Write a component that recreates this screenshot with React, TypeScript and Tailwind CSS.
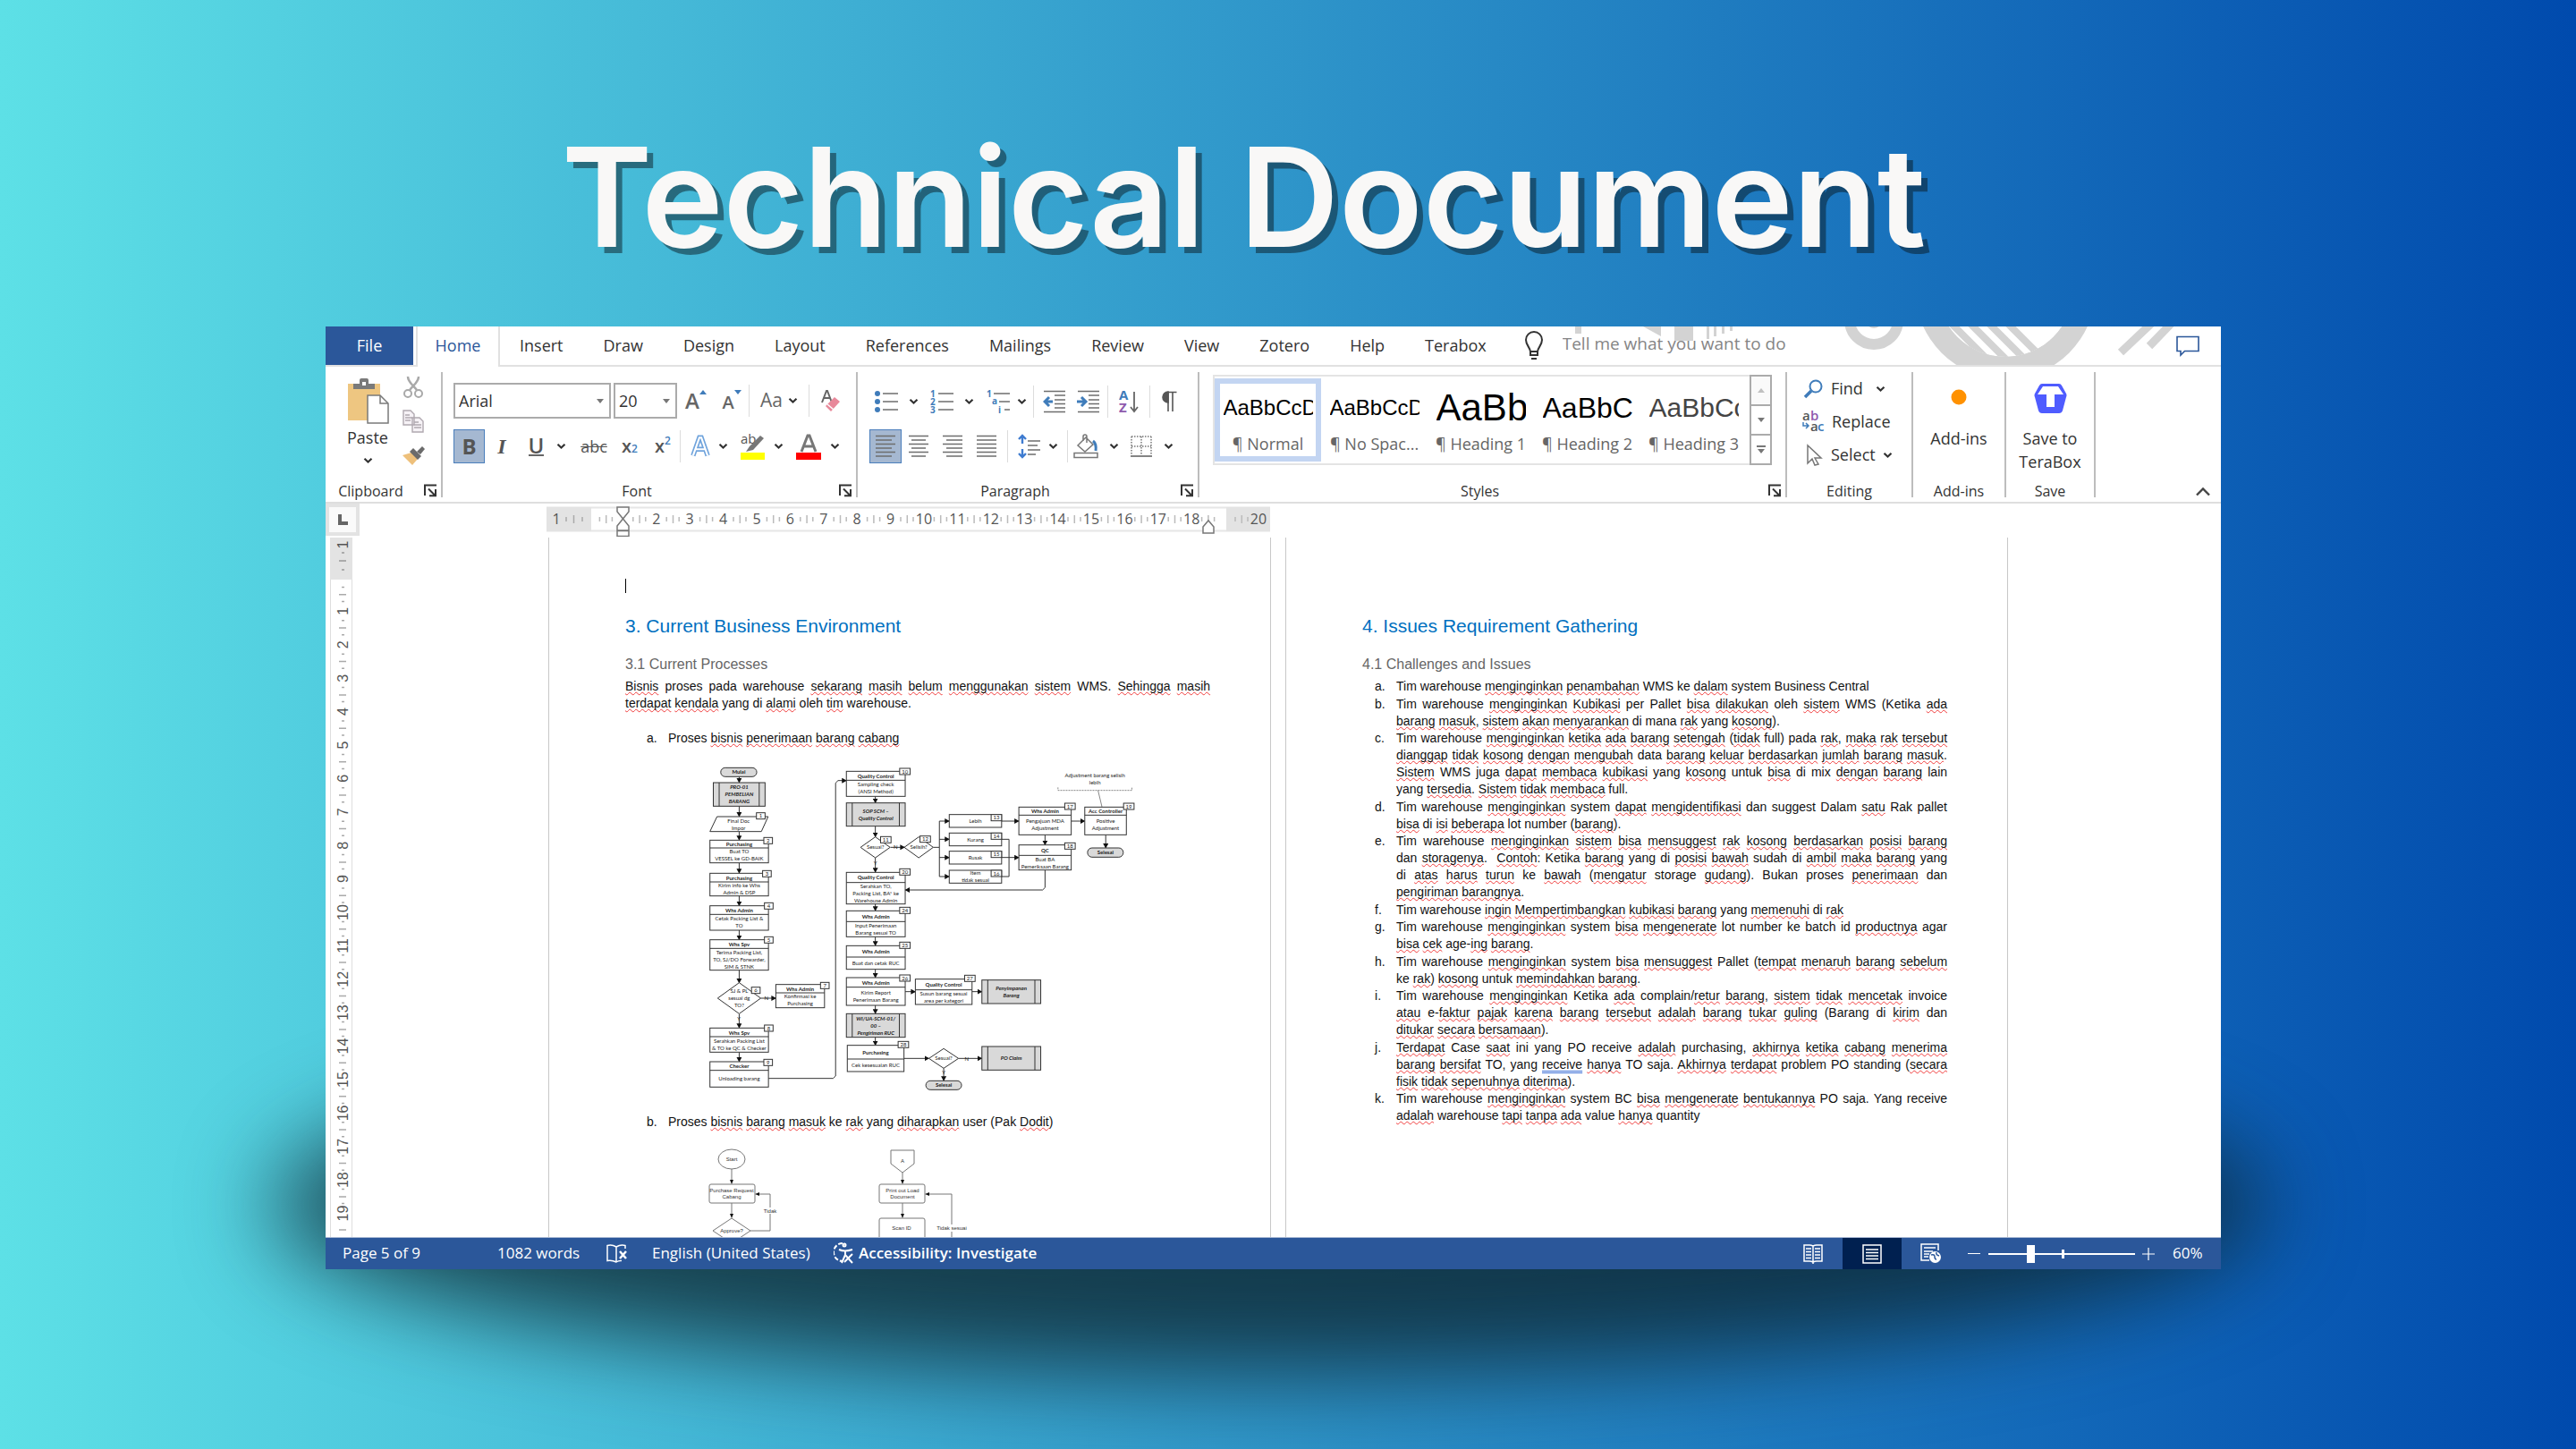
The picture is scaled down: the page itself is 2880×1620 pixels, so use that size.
import React from "react";

/* ---------- shared bits ---------- */

function Chevron() {
  return (
    <svg width="11" height="8" viewBox="0 0 11 8" fill="none" stroke="#333" strokeWidth="2.2" className="shrink-0">
      <path d="M1.5 1.8 5.5 5.6 9.5 1.8" />
    </svg>
  );
}

function Sep() {
  return <span className="h-9 w-px shrink-0 bg-[#dcdcdc]" />;
}

type ToolProps = { label: string; className: string; active?: boolean; children: React.ReactNode };

function Tool({ label, className, active, children }: ToolProps) {
  return (
    <button
      type="button"
      aria-label={label}
      aria-pressed={active}
      className={
        "flex h-[38px] shrink-0 items-center justify-center " +
        (active ? "border border-[#4a7ebb] bg-[#a5b8d1] " : "") +
        className
      }
    >
      {children}
    </button>
  );
}

function Launcher({ label }: { label: string }) {
  return (
    <button type="button" aria-label={label} className="absolute right-1 bottom-0">
      <svg width="15" height="15" viewBox="0 0 15 15" fill="none" stroke="#333" strokeWidth="2">
        <path d="M1 13V1.5H14" />
        <path d="M5 5.5 12 12.5M13 6V13.2H6" />
      </svg>
    </button>
  );
}

function Group({ title, launcher, className, children }: { title: string; launcher?: boolean; className: string; children: React.ReactNode }) {
  return (
    <section
      aria-label={title}
      className={"relative mt-1.5 flex h-[140px] shrink-0 flex-col border-r-2 border-[#bdbdbd] " + className}
    >
      <div className="flex-1">{children}</div>
      <div className={"text-center text-base leading-[14px] " + (launcher ? "pr-7" : "")}>{title}</div>
      {launcher && <Launcher label={title + " settings"} />}
    </section>
  );
}

/* ---------- title bar ---------- */

const tabs = ["Insert", "Draw", "Design", "Layout", "References", "Mailings", "Review", "View", "Zotero", "Help", "Terabox"];

function TabBar() {
  return (
    <nav className="relative flex h-[45px] shrink-0 items-stretch border-b-2 border-[#e1e1e1] text-lg text-[#333]">
      <svg className="absolute top-0 right-0" width="740" height="43" viewBox="1743 365 740 43" fill="#d3d3d3">
        <path d="M1761 365h7v8h-7zM1837 365h20v11zM1872 365h21v16h-21zM1908 365h3v14h-3zM1916 365h3v11h-3zM1925 365h3v8h-3zM1934 365h3v5h-3z" />
        <circle cx="2095" cy="358" r="27" fill="none" stroke="#d3d3d3" strokeWidth="12" />
        <circle cx="2095" cy="358" r="9" />
        <circle cx="2242" cy="323" r="101" />
        <clipPath id="disc">
          <circle cx="2242" cy="323" r="76" />
        </clipPath>
        <g clipPath="url(#disc)">
          <circle cx="2242" cy="323" r="76" fill="#fff" />
          <path d="M2175 355l60 60M2196 355l60 60M2217 355l60 60M2238 355l60 60" stroke="#d3d3d3" strokeWidth="8" />
        </g>
        <path d="M2407 360 2371 394M2431 358 2403 387" stroke="#d3d3d3" strokeWidth="9" />
      </svg>
      <button type="button" className="w-[98px] bg-[#2b579a] pb-0.5 text-white">File</button>
      <button type="button" aria-current="page" className="relative -mb-0.5 ml-[3px] w-[94px] border-x-2 border-[#e1e1e1] bg-white pb-1 text-[#2b579a]">Home</button>
      <div className="flex gap-px">
        {tabs.map((t) => (
          <button key={t} type="button" className="px-[22px] pb-0.5">{t}</button>
        ))}
      </div>
      <label className="relative ml-5 flex flex-1 items-center gap-[21px]">
        <svg width="22" height="34" viewBox="0 0 22 34" fill="none" stroke="#333" strokeWidth="2">
          <path d="M7 23c0-4-5-7-5-13a9 9 0 0 1 18 0c0 6-5 9-5 13v4H7zM7 23h8M8 31h6" />
        </svg>
        <input
          type="text"
          aria-label="Tell me what you want to do"
          placeholder="Tell me what you want to do"
          className="w-72 bg-transparent pb-1 text-[19px] outline-none placeholder:text-[#858585]"
        />
      </label>
      <button type="button" aria-label="Comments" className="relative mr-6">
        <svg width="26" height="24" viewBox="0 0 26 24" fill="#fff" stroke="#2b579a" strokeWidth="1.6">
          <path d="M1 1.500h24v16H9.500L5 22v-4.500H1z" />
        </svg>
      </button>
    </nav>
  );
}

/* ---------- ribbon ---------- */

function ClipboardGroup() {
  return (
    <Group title="Clipboard" launcher className="w-[131px]">
      <div className="flex">
        <button type="button" className="ml-2 flex w-[78px] flex-col items-center pt-1.5 text-lg leading-6">
          <svg width="48" height="52" viewBox="0 0 48 52">
            <path d="M2 7h36v41H2z" fill="#eec681" />
            <path d="M8 13V7h7V3q0-2 2-2h6q2 0 2 2v4h7v6z" fill="#7a7a7a" />
            <path d="M18 5h4v4h-4z" fill="#fff" />
            <path d="M24 20h14l9 9v22H24z" fill="#fff" stroke="#7a7a7a" strokeWidth="1.5" />
            <path d="M38 20v9h9" fill="none" stroke="#7a7a7a" strokeWidth="1.500" />
          </svg>
          <span className="mt-[3px] mb-2.5">Paste</span>
          <Chevron />
        </button>
        <div className="-mt-0.5 flex flex-col">
          <Tool label="Cut" className="-ml-1.5 w-9">
            <svg width="24" height="26" viewBox="0 0 24 26" fill="none" stroke="#a9a9a9" strokeWidth="2">
              <path d="M6 1c0 6 5 9 10 15M18 1c0 6-5 9-10 15" strokeWidth="2.500" />
              <circle cx="6" cy="20" r="4" />
              <circle cx="18" cy="20" r="4" />
            </svg>
          </Tool>
          <Tool label="Copy" className="-ml-1.5 w-9">
            <svg width="26" height="26" viewBox="0 0 26 26" fill="#f6f2f6" stroke="#b0a9b0" strokeWidth="1.400">
              <path d="M2 1h8l4 4v12H2zM12 9h8l4 4v12H12z" />
              <path d="M4 6h5M4 9h8M4 12h6M14 14h5M14 17h8M14 20h8" />
            </svg>
          </Tool>
          <Tool label="Format painter" className="-ml-1.5 w-9">
            <svg width="27" height="24" viewBox="0 0 27 24">
              <path d="M1 12 11 9l7 7-6 7z" fill="#eec07b" />
              <path d="m9 8 4-4 9 9-4 4z" fill="#6b6b6b" />
              <path d="m17 8 6-6 3 3-5 6z" fill="#6b6b6b" />
            </svg>
          </Tool>
        </div>
      </div>
    </Group>
  );
}

function Picker({ label, value, className }: { label: string; value: string; className: string }) {
  return (
    <label className={"relative block h-10 border-2 border-[#ababab] " + className}>
      <select aria-label={label} defaultValue={value} className="h-full w-full appearance-none bg-white px-1 text-lg outline-none">
        <option>{value}</option>
      </select>
      <svg className="absolute top-4 right-1.5" width="8" height="5" viewBox="0 0 8 5" fill="#777">
        <path d="M0 0h8L4 5z" />
      </svg>
    </label>
  );
}

function FontGroup() {
  return (
    <Group title="Font" launcher className="w-[464px]">
      <div className="flex h-[52px] items-end pl-3">
        <div className="flex items-center">
          <Picker label="Font" value="Arial" className="mr-[3px] w-[176px]" />
          <Picker label="Font size" value="20" className="w-[71px]" />
          <Tool label="Grow font" className="w-[42px] text-[#666]">
            <span className="text-2xl font-semibold">A</span>
            <svg className="mb-5" width="8" height="5" viewBox="0 0 8 5" fill="#3f7cba"><path d="M0 5h8L4 0z" /></svg>
          </Tool>
          <Tool label="Shrink font" className="w-[38px] text-[#666]">
            <span className="pt-1 text-xl font-semibold">A</span>
            <svg className="mb-5" width="8" height="5" viewBox="0 0 8 5" fill="#3f7cba"><path d="M0 0h8L4 5z" /></svg>
          </Tool>
          <Sep />
          <Tool label="Change case" className="w-[66px] gap-1.5 text-[#666]">
            <span className="text-[21px]">Aa</span>
            <Chevron />
          </Tool>
          <Sep />
          <Tool label="Clear formatting" className="w-12">
            <svg width="24" height="28" viewBox="0 0 24 28">
              <path d="M2 16 7 3h1l5 13M4 11h7" fill="none" stroke="#666" strokeWidth="2" />
              <path d="m6 20 10-10 6 5-10 11z" fill="#e8889a" />
              <path d="m8 18 7 6" stroke="#fff" strokeWidth="1.500" />
            </svg>
          </Tool>
        </div>
      </div>
      <div className="mt-3 flex items-center pl-3 text-[#555]">
        <Tool label="Bold" active className="w-[35px] text-2xl font-bold">B</Tool>
        <Tool label="Italic" className="w-[38px] font-['Liberation_Serif'] text-2xl font-bold italic">I</Tool>
        <Tool label="Underline" className="ml-0.5 w-[60px] gap-3.5">
          <span className="border-b-2 border-[#666] text-2xl leading-5 font-semibold">U</span>
          <Chevron />
        </Tool>
        <Tool label="Strikethrough" className="w-11 text-lg line-through">abc</Tool>
        <Tool label="Subscript" className="w-9 text-xl font-semibold">x<sub className="text-xs text-[#3f7cba]">2</sub></Tool>
        <Tool label="Superscript" className="w-[38px] text-xl font-semibold">x<sup className="text-xs text-[#3f7cba]">2</sup></Tool>
        <Sep />
        <Tool label="Text effects" className="w-[62px] gap-2">
          <svg width="24" height="26" viewBox="0 0 20 24" fill="none">
            <path d="M2.500 21.500 9 3h2l6.500 18.500M5.500 15h9" stroke="#6fa3dc" strokeWidth="5" />
            <path d="M2.500 21.500 9 3h2l6.500 18.500M5.500 15h9" stroke="#fff" strokeWidth="2" />
          </svg>
          <Chevron />
        </Tool>
        <Tool label="Highlight colour" className="w-[58px] gap-2.5">
          <svg width="27" height="30" viewBox="0 0 27 30">
            <text x="0" y="12" fontSize="15" fill="#555">ab</text>
            <path d="m6 21 4-6L22 3l4 3-12 13z" fill="#777" />
            <path d="M0 22h27v8H0z" fill="#ff0" />
          </svg>
          <Chevron />
        </Tool>
        <Tool label="Font colour" className="w-[66px] gap-2.5">
          <svg width="28" height="30" viewBox="0 0 28 30">
            <path d="M6 21 13 3h2l7 18M9 15h10" fill="none" stroke="#777" strokeWidth="3" />
            <path d="M0 22h28v8H0z" fill="#f00" />
          </svg>
          <Chevron />
        </Tool>
      </div>
    </Group>
  );
}

function Lines({ d }: { d: string }) {
  return (
    <svg width="24" height="26" viewBox="0 0 24 26" fill="none" stroke="#6e6e6e" strokeWidth="1.600">
      <path d={d} />
    </svg>
  );
}

function ParagraphGroup() {
  return (
    <Group title="Paragraph" launcher className="w-[382px]">
      <div className="flex h-[52px] items-end pl-3 text-[#555]">
        <div className="flex items-center">
          <Tool label="Bullets" className="w-[62px] gap-3">
            <svg width="26" height="26" viewBox="0 0 26 26" stroke="#6e6e6e" strokeWidth="1.600">
              <path d="M9 4h17M9 13h17M9 22h17" />
              <g fill="#3f7cba" stroke="none"><circle cx="3" cy="4" r="3" /><circle cx="3" cy="13" r="3" /><circle cx="3" cy="22" r="3" /></g>
            </svg>
            <Chevron />
          </Tool>
          <Tool label="Numbering" className="w-[62px] gap-3">
            <svg width="26" height="28" viewBox="0 0 26 28">
              <path d="M9 5h17M9 14h17M9 23h17" stroke="#6e6e6e" strokeWidth="1.600" />
              <g fill="#3f7cba" fontSize="10" fontWeight="700"><text x="0" y="9">1</text><text x="0" y="18">2</text><text x="0" y="27">3</text></g>
            </svg>
            <Chevron />
          </Tool>
          <Tool label="Multilevel list" className="w-[60px] gap-2">
            <svg width="26" height="28" viewBox="0 0 26 28">
              <path d="M8 5h18M14 14h12M20 23h6" stroke="#6e6e6e" strokeWidth="1.600" />
              <g fill="#3f7cba" fontSize="10" fontWeight="700"><text x="0" y="9">1</text><text x="6" y="17">a</text><text x="13" y="27">i</text></g>
            </svg>
            <Chevron />
          </Tool>
          <Sep />
          <Tool label="Decrease indent" className="ml-1 w-[38px]">
            <svg width="26" height="26" viewBox="0 0 26 26" fill="none" stroke="#6e6e6e" strokeWidth="1.600">
              <path d="M1 1.500h24M13 6h12M13 11h12M13 15.500h12M13 20h12M1 24.500h24" />
              <path d="M11 13H2M7 8l-5 5 5 5" stroke="#3f7cba" strokeWidth="3" />
            </svg>
          </Tool>
          <Tool label="Increase indent" className="mr-0.5 w-[38px]">
            <svg width="26" height="26" viewBox="0 0 26 26" fill="none" stroke="#6e6e6e" strokeWidth="1.600">
              <path d="M1 1.500h24M13 6h12M13 11h12M13 15.500h12M13 20h12M1 24.500h24" />
              <path d="M0 13h9M5 8l5 5-5 5" stroke="#3f7cba" strokeWidth="3" />
            </svg>
          </Tool>
          <Sep />
          <Tool label="Sort" className="w-[46px]">
            <svg width="22" height="28" viewBox="0 0 22 28">
              <text x="0" y="12" fontSize="15" fontWeight="700" fill="#3f7cba">A</text>
              <text x="0" y="26" fontSize="15" fontWeight="700" fill="#8e5aad">Z</text>
              <path d="M17 3v22M13 20l4 5 4-5" fill="none" stroke="#666" strokeWidth="1.800" />
            </svg>
          </Tool>
          <Sep />
          <Tool label="Show marks" className="w-[42px]">
            <svg width="18" height="24" viewBox="0 0 18 24" fill="none" stroke="#555" strokeWidth="1.600">
              <path d="M17.500 1.500H7M8 1v22M13 1v22" />
              <path d="M8 1a6 6 0 0 0 0 12z" fill="#555" />
            </svg>
          </Tool>
        </div>
      </div>
      <div className="mt-3 flex items-center pl-[13px]">
        <Tool label="Align left" active className="w-9"><Lines d="M1 1.500h22M1 6h18M1 10.500h22M1 15h18M1 19.500h22M1 24h18" /></Tool>
        <Tool label="Centre" className="w-[38px]"><Lines d="M1 1.500h22M4 6h16M1 10.500h22M4 15h16M1 19.500h22M4 24h16" /></Tool>
        <Tool label="Align right" className="w-[38px]"><Lines d="M1 1.500h22M5 6h18M1 10.500h22M5 15h18M1 19.500h22M5 24h18" /></Tool>
        <Tool label="Justify" className="mr-1 w-[38px]"><Lines d="M1 1.500h22M1 6h22M1 10.500h22M1 15h22M1 19.500h22M1 24h22" /></Tool>
        <Sep />
        <Tool label="Line spacing" className="w-[66px] gap-2">
          <svg width="26" height="28" viewBox="0 0 26 28" fill="none">
            <path d="M11 8h14M11 13h11M11 18h14M11 23h9" stroke="#6e6e6e" strokeWidth="1.600" />
            <path d="M5 2v9M1 6l4-4 4 4M5 17v9M1 22l4 4 4-4" stroke="#3f7cd0" strokeWidth="2.400" />
          </svg>
          <Chevron />
        </Tool>
        <Sep />
        <Tool label="Shading" className="w-[62px] gap-3">
          <svg width="28" height="28" viewBox="0 0 28 28" fill="none" stroke="#777" strokeWidth="1.500">
            <path d="m5 13 9-9 8 8-9 8zM11 8V3q0-2 2-2t2 2v7" />
            <path d="M22 8q4 3 3 11" stroke="#3f7cba" strokeWidth="3" />
            <path d="M1 21.500h26v5H1z" />
          </svg>
          <Chevron />
        </Tool>
        <Tool label="Borders" className="w-[62px] gap-3">
          <svg width="26" height="26" viewBox="0 0 26 26" fill="none" stroke="#777" strokeWidth="1.500">
            <path d="M2 2h22M2 13h22M2 2v21M13 2v21M24 2v21" strokeDasharray="1.500 1.500" />
            <path d="M1 24h24" strokeWidth="1.800" />
          </svg>
          <Chevron />
        </Tool>
      </div>
    </Group>
  );
}

const styleCards = [
  { name: "Normal", sample: "AaBbCcD", size: "text-2xl text-black", active: true },
  { name: "No Spac...", sample: "AaBbCcD", size: "text-2xl text-black" },
  { name: "Heading 1", sample: "AaBb", size: "text-[42px] text-black" },
  { name: "Heading 2", sample: "AaBbC", size: "text-[32px] text-black" },
  { name: "Heading 3", sample: "AaBbCc", size: "text-[30px] text-[#444]" },
];

function StylesGroup() {
  return (
    <Group title="Styles" launcher className="w-[657px]">
      <div className="mt-[3px] mr-[15px] ml-[15px] flex h-[101px] border-2 border-[#e4e4e4]">
        <div className="flex flex-1">
          {styleCards.map((s) => (
            <button
              key={s.name}
              type="button"
              aria-pressed={!!s.active}
              className={
                "my-0.5 flex w-[119px] shrink-0 flex-col items-center border-[6px] py-0.5 " +
                (s.active ? "border-[#c3d5f2]" : "border-white")
              }
            >
              <span className={"mb-1 flex h-[50px] w-[100px] items-center overflow-hidden font-['Liberation_Sans'] leading-none whitespace-nowrap " + s.size}>
                {s.sample}
              </span>
              <span className="text-lg leading-6 whitespace-nowrap text-[#666]">¶ {s.name}</span>
            </button>
          ))}
        </div>
        <div className="-m-0.5 flex w-[25px] flex-col divide-y-2 divide-[#ababab] border-2 border-[#ababab] text-[#777]">
          <button type="button" aria-label="Previous styles" className="flex flex-1 items-center justify-center bg-[#fafafa]">
            <svg width="8" height="5" fill="#c0c0c0"><path d="M0 5h8L4 0z" /></svg>
          </button>
          <button type="button" aria-label="Next styles" className="flex flex-1 items-center justify-center">
            <svg width="8" height="5" fill="#777"><path d="M0 0h8L4 5z" /></svg>
          </button>
          <button type="button" aria-label="All styles" className="flex flex-1 items-center justify-center">
            <svg width="10" height="9" fill="#777"><path d="M0 0h10v2H0zM1 4h8L5 9z" /></svg>
          </button>
        </div>
      </div>
    </Group>
  );
}

function Ribbon() {
  return (
    <div className="relative flex h-[153px] shrink-0 border-b-2 border-[#dedede] text-[#333]">
      <ClipboardGroup />
      <FontGroup />
      <ParagraphGroup />
      <StylesGroup />
      <Group title="Editing" className="w-[141px]">
        <div className="flex flex-col pl-[17px] text-lg leading-[37px]">
          <button type="button" className="flex items-center gap-2">
            <svg width="24" height="22" viewBox="0 0 24 22" fill="none" stroke="#3f7cba">
              <circle cx="15" cy="8" r="6.500" strokeWidth="2" />
              <path d="m10 13-7 7" strokeWidth="3.500" />
            </svg>
            Find
            <span className="ml-1.5"><Chevron /></span>
          </button>
          <button type="button" className="flex items-center gap-2">
            <svg width="25" height="26" viewBox="0 0 25 26" fontSize="15" fontWeight="600">
              <text x="0" y="11" fill="#555">a</text>
              <text x="9" y="11" fill="#8e5aad">b</text>
              <text x="9" y="23" fill="#555">a</text>
              <text x="17" y="23" fill="#3f7cba">c</text>
              <path d="M1 13v4h6M4 14l3 3-3 3" fill="none" stroke="#3f7cba" strokeWidth="1.500" />
            </svg>
            Replace
          </button>
          <button type="button" className="flex items-center gap-2">
            <svg width="24" height="26" viewBox="0 0 24 26" fill="#fff" stroke="#777" strokeWidth="1.500">
              <path d="M6 2v20l5-5 3 7 4-1-4-7h7z" />
            </svg>
            Select
            <Chevron />
          </button>
        </div>
      </Group>
      <Group title="Add-ins" className="w-[104px]">
        <button type="button" className="flex w-full flex-col items-center pt-[19px] text-lg leading-[26px]">
          <svg className="mb-6" width="18" height="18"><circle cx="9" cy="9" r="8.500" fill="#ff9100" /></svg>
          Add-ins
        </button>
      </Group>
      <Group title="Save" className="w-[100px]">
        <button type="button" className="flex w-full flex-col items-center pt-[13px] text-lg leading-[26px]">
          <svg className="mb-[15px]" width="37" height="33" viewBox="0 0 37 33">
            <path d="M9 0h19q2 0 3 2l5 9q1 2 0 4l-4 15q-1 3-4 3H9q-3 0-4-3L1 15q-1-2 0-4l5-9q1-2 3-2z" fill="#4f5cff" />
            <path d="M10 3h17l6 9H23v14H14V12H4z" fill="#fff" />
          </svg>
          <span>Save to<br />TeraBox</span>
        </button>
      </Group>
      <button type="button" aria-label="Collapse ribbon" className="mr-3 mb-1.5 ml-auto self-end">
        <svg width="16" height="11" viewBox="0 0 16 11" fill="none" stroke="#444" strokeWidth="2.400"><path d="m1 9.500 7-7 7 7" /></svg>
      </button>
    </div>
  );
}

/* ---------- rulers ---------- */

function HorizontalRuler() {
  const marks = Array.from({ length: 20 }, (_, i) => i + 1);
  const at = (n: number) => 48 + n * 37.4;
  return (
    <svg width="810" height="34" viewBox="0 0 810 34" fontSize="16" fill="#555" textAnchor="middle">
      <path d="M0 1.500h809M0 27.500h809" stroke="#e6e6e6" strokeWidth="2" />
      <path d="M0 1h50v27H0zM760 1h49v27H760z" fill="#e3e3e3" />
      <text x="11" y="20">1</text>
      <path d="M22 12v5M30.500 10v9M40 12v5" stroke="#aaa" strokeWidth="1.500" />
      {marks.map((n) => (
        <g key={n}>
          {n !== 19 && n !== 1 && <text x={at(n)} y="20">{n}</text>}
          <path d={`M${at(n) - 26} 12v5M${at(n) - 18.700} 10v9M${at(n) - 12} 12v5`} stroke="#bbb" strokeWidth="1.500" />
        </g>
      ))}
      <g fill="#fff" stroke="#777" strokeWidth="1.500">
        <path d="M79 1h13v5l-6.500 8L79 6zM79 22l6.500-8 6.500 8v5H79zM79 27.500h13v6H79z" />
        <path d="M734 23l6-7 6 7v7h-12z" />
      </g>
    </svg>
  );
}

function VerticalRuler() {
  const marks = Array.from({ length: 19 }, (_, i) => i + 1);
  const at = (n: number) => 45 + n * 37.4;
  const label = (n: number | string, y: number) => (
    <text x="14" y={y} transform={`rotate(-90 14 ${y})`} dy="6">{n}</text>
  );
  return (
    <svg width="25" height="782" viewBox="0 0 25 782" fontSize="16" fill="#555" textAnchor="middle" className="ml-[5px] shrink-0">
      <path d="M.500 0v782M24.500 0v782" stroke="#dedede" />
      <path d="M0 0h25v47H0z" fill="#e3e3e3" />
      {label(1, 8)}
      <path d="M13 17h3M10 26h8M13 36h3" stroke="#999" strokeWidth="1.500" />
      {marks.map((n) => (
        <g key={n}>
          {label(n, at(n))}
          <path d={`M13 ${at(n) - 27}h3M10 ${at(n) - 18.700}h8M13 ${at(n) - 11}h3`} stroke="#aaa" strokeWidth="1.500" />
        </g>
      ))}
      <path d="M10 774h8" stroke="#aaa" strokeWidth="1.500" />
    </svg>
  );
}

/* ---------- document text ---------- */

/* [word] marks a spelling error, {word} a grammar hint. */
function Marked({ text }: { text: string }) {
  return (
    <>
      {text.split(/(\[[^\]]*\]|\{[^}]*\})/).map((part, i) =>
        part.startsWith("[") ? (
          <span key={i} className="underline decoration-[#f03c3c] decoration-wavy decoration-1 underline-offset-1 [text-decoration-skip-ink:none]">
            {part.slice(1, -1)}
          </span>
        ) : part.startsWith("{") ? (
          <span key={i} className="underline decoration-[#3b6fd6] decoration-double decoration-1 underline-offset-2 [text-decoration-skip-ink:none]">
            {part.slice(1, -1)}
          </span>
        ) : (
          part
        )
      )}
    </>
  );
}

function Lined({ lines }: { lines: string[] }) {
  return (
    <>
      {lines.map((l, i) => (
        <span key={i} className={i < lines.length - 1 ? "block [text-align-last:justify]" : "block"}>
          <Marked text={l} />
        </span>
      ))}
    </>
  );
}

const issues: string[][] = [
  ["Tim warehouse [menginginkan] [penambahan] WMS ke [dalam] system Business Central"],
  [
    "Tim warehouse [menginginkan] [Kubikasi] per Pallet [bisa] [dilakukan] oleh [sistem] WMS (Ketika [ada]",
    "[barang] [masuk], [sistem] [akan] [menyarankan] di mana [rak] yang [kosong]).",
  ],
  [
    "Tim warehouse [menginginkan] [ketika] [ada] [barang] [setengah] ([tidak] full) pada [rak], [maka] [rak] [tersebut]",
    "[dianggap] [tidak] [kosong] [dengan] [mengubah] data [barang] [keluar] [berdasarkan] [jumlah] [barang] [masuk].",
    "[Sistem] WMS juga [dapat] [membaca] [kubikasi] yang [kosong] untuk [bisa] di mix [dengan] [barang] lain",
    "yang [tersedia]. [Sistem] [tidak] [membaca] full.",
  ],
  [
    "Tim warehouse [menginginkan] system [dapat] [mengidentifikasi] dan suggest Dalam [satu] Rak pallet",
    "[bisa] di [isi] [beberapa] lot number ([barang]).",
  ],
  [
    "Tim warehouse [menginginkan] [sistem] [bisa] [mensuggest] [rak] [kosong] [berdasarkan] [posisi] [barang]",
    "dan [storagenya].\u00a0 [Contoh]: Ketika [barang] yang di [posisi] [bawah] sudah di [ambil] [maka] [barang] yang",
    "di [atas] [harus] [turun] ke [bawah] ([mengatur] storage [gudang]). Bukan proses [penerimaan] dan",
    "[pengiriman] [barangnya].",
  ],
  ["Tim warehouse [ingin] [Mempertimbangkan] [kubikasi] [barang] yang [memenuhi] di [rak]"],
  [
    "Tim warehouse [menginginkan] system [bisa] [mengenerate] lot number ke batch id [productnya] agar",
    "[bisa] [cek] age-[ing] [barang].",
  ],
  [
    "Tim warehouse [menginginkan] system [bisa] [mensuggest] Pallet ([tempat] [menaruh] [barang] [sebelum]",
    "ke [rak]) [kosong] untuk [memindahkan] [barang].",
  ],
  [
    "Tim warehouse [menginginkan] Ketika [ada] complain/[retur] [barang], [sistem] [tidak] [mencetak] invoice",
    "[atau] e-[faktur] [pajak] [karena] [barang] [tersebut] [adalah] [barang] [tukar] [guling] (Barang di [kirim] dan",
    "[ditukar] [secara] [bersamaan]).",
  ],
  [
    "[Terdapat] Case [saat] ini yang PO receive [adalah] purchasing, [akhirnya] [ketika] [cabang] [menerima]",
    "[barang] [bersifat] TO, yang {receive} [hanya] TO saja. [Akhirnya] [terdapat] problem PO standing ([secara]",
    "[fisik] [tidak] [sepenuhnya] [diterima]).",
  ],
  [
    "Tim warehouse [menginginkan] system BC [bisa] [mengenerate] [bentukannya] PO saja. Yang receive",
    "[adalah] warehouse [tapi] [tanpa] [ada] value [hanya] quantity",
  ],
];

/* ---------- flow chart ---------- */

/* Diagram units to pixels. */
const X = (n: number) => n / 2.904;
const Y = (n: number) => n / 3;

function Label({ x, y, lines, bold, italic }: { x: number; y: number; lines: string[]; bold?: boolean; italic?: boolean }) {
  return (
    <>
      {lines.map((l, i) => (
        <text
          key={i}
          x={X(x)}
          y={Y(y + (i - (lines.length - 1) / 2) * 24) + 2}
          textAnchor="middle"
          fontWeight={bold ? 700 : 400}
          fontStyle={italic ? "italic" : "normal"}
          stroke="none"
          fill="#222"
        >
          {l}
        </text>
      ))}
    </>
  );
}

function Rect({ b, fill = "#fff", r = 0 }: { b: number[]; fill?: string; r?: number }) {
  return <rect x={X(b[0])} y={Y(b[1])} width={X(b[2] - b[0])} height={Y(b[3] - b[1])} fill={fill} rx={r} />;
}

function Badge({ x, y, n }: { x: number; y: number; n: number }) {
  const w = n > 9 ? 34 : 28;
  return (
    <>
      <Rect b={[x, y, x + w, y + 21]} />
      <Label x={x + w / 2} y={y + 11} lines={[String(n)]} />
    </>
  );
}

type Step = { b: number[]; split: number; head: string; body: string[]; n: number; badge: number[] };

const steps: Step[] = [
  { b: [95, 301, 285, 377], split: 327, head: "Purchasing", body: ["Buat TO", "VESSEL ke GD-BAIK"], n: 2, badge: [270, 292] },
  { b: [95, 412, 285, 488], split: 441, head: "Purchasing", body: ["Kirim info ke Whs", "Admin & DSP"], n: 3, badge: [266, 403] },
  { b: [95, 521, 285, 603], split: 550, head: "Whs Admin", body: ["Cetak Packing List &", "TO"], n: 4, badge: [272, 511] },
  { b: [95, 635, 285, 737], split: 664, head: "Whs Spv", body: ["Terima Packing List,", "TO, SJ/DO Forwarder,", "SIM & STNK"], n: 5, badge: [272, 625] },
  { b: [309, 785, 467, 863], split: 813, head: "Whs Admin", body: ["Konfirmasi ke", "Purchasing"], n: 7, badge: [454, 778] },
  { b: [95, 931, 285, 1012], split: 960, head: "Whs Spv", body: ["Serahkan Packing List", "& TO ke QC & Checker"], n: 8, badge: [272, 921] },
  { b: [95, 1044, 285, 1129], split: 1073, head: "Checker", body: ["Unloading barang"], n: 9, badge: [270, 1036] },
  { b: [538, 70, 729, 154], split: 100, head: "Quality Control", body: ["Sampling check", "(ANSI Method)"], n: 10, badge: [711, 60] },
  { b: [1098, 190, 1268, 283], split: 217, head: "Whs Admin", body: ["Pengajuan MDA", "Adjustment"], n: 17, badge: [1247, 177] },
  { b: [1312, 190, 1447, 283], split: 217, head: "Acc Controller", body: ["Positive", "Adjustment"], n: 19, badge: [1438, 177] },
  { b: [1098, 317, 1268, 401], split: 352, head: "QC", body: ["Buat BA", "Pemeriksaan Barang"], n: 18, badge: [1247, 310] },
  { b: [538, 409, 729, 515], split: 443, head: "Quality Control", body: ["Serahkan TO,", "Packing List, BA* ke", "Warehouse Admin"], n: 20, badge: [711, 397] },
  { b: [538, 538, 729, 625], split: 574, head: "Whs Admin", body: ["Input Penerimaan", "Barang sesuai TO"], n: 24, badge: [711, 526] },
  { b: [538, 655, 729, 734], split: 693, head: "Whs Admin", body: ["Buat dan cetak RUC"], n: 25, badge: [711, 643] },
  { b: [538, 762, 729, 855], split: 794, head: "Whs Admin", body: ["Kirim Report", "Penerimaan Barang"], n: 26, badge: [711, 753] },
  { b: [762, 767, 946, 852], split: 803, head: "Quality Control", body: ["Susun barang sesuai", "area per kategori"], n: 27, badge: [922, 754] },
  { b: [541, 989, 725, 1077], split: 1035, head: "Purchasing", body: ["Cek kesesuaian RUC"], n: 28, badge: [706, 976] },
];

const processes = [
  { b: [106, 108, 274, 187], lines: ["PRO-01", "PEMBELIAN", "BARANG"] },
  { b: [538, 176, 729, 254], lines: ["SOP SCM –", "Quality Control"] },
  { b: [978, 770, 1169, 849], lines: ["Penyimpanan", "Barang"] },
  { b: [538, 883, 729, 962], lines: ["WI/UA-SCM-01/", "00 –", "Pengiriman RUC"] },
  { b: [978, 993, 1169, 1072], lines: ["PO Claim"] },
];

const outcomes = [
  { y: 215, lines: ["Lebih"], n: 13 },
  { y: 277, lines: ["Kurang"], n: 14 },
  { y: 338, lines: ["Rusak"], n: 15 },
  { y: 402, lines: ["Item", "tidak sesuai"], n: 16 },
];

const diamonds = [
  { c: [190, 831, 70, 52], lines: ["SJ & PL", "sesuai dg", "TO?"] },
  { c: [632, 325, 48, 35], lines: ["Sesuai?"] },
  { c: [773, 325, 47, 35], lines: ["Selisih?"] },
  { c: [854, 1033, 48, 33], lines: ["Sesuai?"] },
];

const terminals = [
  { b: [130, 58, 247, 88], t: "Mulai" },
  { b: [1321, 327, 1437, 358], t: "Selesai" },
  { b: [796, 1108, 912, 1138], t: "Selesai" },
];

const arrows: number[][] = [
  [190, 88, 190, 108], [190, 187, 190, 222], [190, 272, 190, 301], [190, 377, 190, 412], [190, 488, 190, 521],
  [190, 603, 190, 635], [190, 737, 190, 780], [190, 884, 190, 931], [190, 1012, 190, 1044], [260, 831, 309, 831],
  [632, 154, 632, 176], [632, 254, 632, 290], [632, 360, 632, 409], [681, 325, 727, 325], [632, 515, 632, 538],
  [632, 625, 632, 655], [632, 734, 632, 762], [632, 855, 632, 883], [632, 962, 632, 989],
  [729, 809, 762, 809], [946, 809, 978, 809], [725, 1033, 806, 1033], [902, 1033, 978, 1033], [854, 1066, 854, 1108],
  [1042, 237, 1098, 237], [1268, 237, 1312, 237], [1183, 283, 1183, 317], [1380, 283, 1380, 327], [1042, 359, 1098, 359],
  [820, 325, 840, 325, 840, 237, 872, 237], [840, 298, 872, 298], [840, 359, 872, 359], [840, 325, 840, 423, 872, 423],
  [1183, 401, 1183, 460, 1175, 468, 729, 468], [285, 1100, 495, 1100, 503, 1092, 503, 109, 511, 101, 538, 101],
];

const toPath = (p: number[]) => {
  let d = "";
  for (let i = 0; i < p.length; i += 2) d += (i ? "L" : "M") + X(p[i]) + " " + Y(p[i + 1]);
  return d;
};

function ReceivingFlow() {
  return (
    <svg width="540" height="400" viewBox="0 0 540 400" className="mt-1 ml-[62px] font-[Lato]" fontSize="6" stroke="#333" strokeWidth="1" role="img" aria-label="Receiving flow chart">
      <defs>
        <marker id="tip" markerUnits="userSpaceOnUse" markerWidth="6" markerHeight="6" refX="5" refY="3" orient="auto">
          <path d="M0 0 5.500 3 0 6z" fill="#111" stroke="none" />
        </marker>
      </defs>
      {arrows.map((a, i) => (
        <path key={i} d={toPath(a)} fill="none" markerEnd="url(#tip)" />
      ))}
      <path d={toPath([1042, 298, 1066, 298, 1066, 423, 1042, 423])} fill="none" />
      <path d={toPath([1355, 134, 1368, 190])} stroke="#888" fill="none" />
      <path d={toPath([1225, 124, 1225, 134, 1465, 134, 1465, 124])} stroke="#888" strokeDasharray="2 1" fill="none" />
      <Label x={1345} y={97} lines={["Adjustment barang selisih", "lebih"]} />
      <path d={toPath([118, 222, 284, 222, 262, 272, 95, 272]) + "z"} fill="#fff" />
      <Label x={188} y={248} lines={["Final Doc", "Impor"]} />
      <Badge x={246} y={209} n={1} />
      {terminals.map((t, i) => (
        <g key={i}>
          <Rect b={t.b} fill="#d9d9d9" r={5} />
          <Label x={(t.b[0] + t.b[2]) / 2} y={(t.b[1] + t.b[3]) / 2} lines={[t.t]} bold />
        </g>
      ))}
      {processes.map((p) => (
        <g key={p.lines[0]}>
          <Rect b={p.b} fill="#d9d9d9" />
          <path d={toPath([p.b[0] + 19, p.b[1], p.b[0] + 19, p.b[3]]) + toPath([p.b[2] - 19, p.b[1], p.b[2] - 19, p.b[3]])} />
          <Label x={(p.b[0] + p.b[2]) / 2} y={(p.b[1] + p.b[3]) / 2} lines={p.lines} bold italic />
        </g>
      ))}
      {diamonds.map((d, i) => (
        <g key={i}>
          <path d={toPath([d.c[0], d.c[1] - d.c[3], d.c[0] + d.c[2], d.c[1], d.c[0], d.c[1] + d.c[3], d.c[0] - d.c[2], d.c[1]]) + "z"} fill="#fff" />
          <Label x={d.c[0]} y={d.c[1]} lines={d.lines} />
        </g>
      ))}
      <Badge x={230} y={794} n={6} />
      <Badge x={649} y={289} n={11} />
      <Badge x={777} y={287} n={12} />
      {outcomes.map((o) => (
        <g key={o.n}>
          <Rect b={[872, o.y, 1042, o.y + 43]} />
          <Badge x={1008} y={o.y} n={o.n} />
          <Label x={957} y={o.y + 22} lines={o.lines} />
        </g>
      ))}
      {steps.map((s) => (
        <g key={s.n}>
          <Rect b={s.b} />
          <path d={toPath([s.b[0], s.split, s.b[2], s.split])} />
          <Label x={(s.b[0] + s.b[2]) / 2} y={(s.b[1] + s.split) / 2 + 1} lines={[s.head]} bold />
          <Label x={(s.b[0] + s.b[2]) / 2} y={(s.split + s.b[3]) / 2} lines={s.body} />
          <Badge x={s.badge[0]} y={s.badge[1]} n={s.n} />
        </g>
      ))}
      {[[189, 900, "Y"], [632, 378, "Y"], [854, 1081, "Y"], [278, 832, "N"], [698, 325, "N"], [929, 1034, "N"]].map((l, i) => (
        <Label key={i} x={l[0] as number} y={l[1] as number} lines={[l[2] as string]} />
      ))}
    </svg>
  );
}

function StorageFlow() {
  return (
    <svg width="320" height="110" viewBox="790 1280 320 110" className="mt-[15px] ml-[91px] font-['Liberation_Sans']" fontSize="6" fill="#fff" stroke="#777" strokeWidth="1" role="img" aria-label="Storage flow chart">
      <ellipse cx="818" cy="1297" rx="15" ry="11" />
      <path d="M996 1287h26v15l-13 10-13-10zM818 1363l21 14-21 14-21-14z" />
      <rect x="793" y="1325" width="51" height="21" rx="2" />
      <rect x="983" y="1325" width="51" height="21" rx="2" />
      <rect x="983" y="1363" width="51" height="40" rx="2" />
      <g fill="none">
        <path d="M818 1308v13M818 1346v14M839 1377h22v-41h-12M1009 1312v9M1009 1346v14M1064 1390v-54h-25" />
      </g>
      <path d="M816 1320h4l-2 5zM816 1358h4l-2 5zM1007 1320h4l-2 5zM1007 1358h4l-2 5zM849 1334v4l-5-2zM1039 1334v4l-5-2z" fill="#111" stroke="none" />
      <path d="M855 1351h12v7h-12zM1050 1370h28v8h-28z" stroke="none" />
      <g stroke="none" fill="#333" textAnchor="middle">
        <text x="818" y="1299">Start</text>
        <text x="1009" y="1301">A</text>
        <text x="818" y="1334">Purchase Request</text>
        <text x="818" y="1341">Cabang</text>
        <text x="1009" y="1334">Print out Load</text>
        <text x="1009" y="1341">Document</text>
        <text x="818" y="1379">Approve?</text>
        <text x="861" y="1357">Tidak</text>
        <text x="1008" y="1376">Scan ID</text>
        <text x="1064" y="1376">Tidak sesuai</text>
      </g>
    </svg>
  );
}

/* ---------- document ---------- */

function Document() {
  return (
    <div className="flex min-h-0 flex-1 overflow-hidden font-['Liberation_Sans'] text-[14px] leading-[19px] text-[#111]">
      <VerticalRuler />
      <article className="ml-[219px] w-[808px] shrink-0 border-x border-[#c8c8c8] pr-[67px] pl-[85px]">
        <div className="mt-[46px] h-4 w-px bg-black" />
        <h2 className="mt-[25px] text-[21px] leading-6 text-[#0070c0]">3. Current Business Environment</h2>
        <h3 className="mt-[21px] text-base leading-5 text-[#666]">3.1 Current Processes</h3>
        <p className="mt-[5px]">
          <Lined
            lines={[
              "[Bisnis] proses pada warehouse [sekarang] [masih] [belum] [menggunakan] [sistem] WMS. [Sehingga] [masih]",
              "[terdapat] [kendala] yang di [alami] oleh [tim] warehouse.",
            ]}
          />
        </p>
        <p className="mt-5 flex pl-6"><span className="w-6">a.</span><span>Proses <Marked text="[bisnis] [penerimaan] [barang] [cabang]" /></span></p>
        <ReceivingFlow />
        <p className="mt-1.5 flex pl-6">
          <span className="w-6">b.</span>
          <span><Marked text="Proses [bisnis] [barang] [masuk] ke [rak] yang [diharapkan] user (Pak [Dodit])" /></span>
        </p>
        <StorageFlow />
      </article>
      <article className="ml-4 w-[808px] shrink-0 border-x border-[#c8c8c8] pr-[67px] pl-[85px]">
        <h2 className="mt-[87px] text-[21px] leading-6 text-[#0070c0]">4. Issues Requirement Gathering</h2>
        <h3 className="mt-[21px] text-base leading-5 text-[#666]">4.1 Challenges and Issues</h3>
        <ol className="mt-[5px] pl-[14px]">
          {issues.map((lines, i) => (
            <li key={i} className="flex even:pt-px">
              <span className="w-6 shrink-0">{"abcdefghijk"[i]}.</span>
              <span className="flex-1"><Lined lines={lines} /></span>
            </li>
          ))}
        </ol>
      </article>
    </div>
  );
}

/* ---------- status bar ---------- */

function StatusBar() {
  return (
    <footer className="flex h-9 shrink-0 items-center border-t border-[#a9b9d4] bg-[#2b579a] pl-[19px] text-[17px] text-white">
      <span className="w-[173px] pb-0.5">Page 5 of 9</span>
      <span className="w-[122px] pb-0.5">1082 words</span>
      <button type="button" aria-label="Proofing" className="w-[51px]">
        <svg width="24" height="22" viewBox="0 0 24 22" fill="none" stroke="#fff" strokeWidth="1.500">
          <path d="M11 20V3Q6 0 1 1.500v17q5-1 10 1.500 3-2 6-1.500M11 3q5-3 10-1.500V5" />
          <path d="m15 8 7 8M22 8l-7 8" strokeWidth="2.500" />
        </svg>
      </button>
      <span className="w-[203px] pb-0.5">English (United States)</span>
      <button type="button" className="flex items-center gap-1 pb-0.5 font-semibold">
        <svg width="24" height="26" viewBox="0 0 24 26" fill="none" stroke="#fff" strokeWidth="2">
          <path d="M10 2a10 10 0 0 0 0 20" strokeDasharray="5 2" />
          <circle cx="12" cy="4" r="1.500" />
          <path d="M6 9q6 3 15 0M13 10v5l-4 9M13 15l8 9M21 14l-9 9" />
        </svg>
        Accessibility: Investigate
      </button>
      <div className="ml-auto flex h-full items-center">
        <button type="button" aria-label="Read mode" className="flex h-full w-[66px] items-center justify-center">
          <svg width="22" height="22" viewBox="0 0 22 22" fill="none" stroke="#fff" strokeWidth="1.500">
            <path d="M11 2v20M11 2q-2-1-4-1H1v18h6q2 0 4 1 2-1 4-1h6V1h-6q-2 0-4 1M3 5h6M3 8.500h6M3 12h6M3 15.500h6M13 5h6M13 8.500h6M13 12h6M13 15.500h6" />
          </svg>
        </button>
        <button type="button" aria-label="Print layout" aria-pressed="true" className="flex h-full w-[66px] items-center justify-center bg-[#002050]">
          <svg width="22" height="22" viewBox="0 0 22 22" fill="none" stroke="#fff" strokeWidth="1.500">
            <path d="M1 1h20v20H1zM4 6h14M4 9.500h14M4 13h14M4 16.500h14" />
          </svg>
        </button>
        <button type="button" aria-label="Web layout" className="flex h-full w-[66px] items-center justify-center">
          <svg width="24" height="23" viewBox="0 0 24 23" fill="none" stroke="#fff" strokeWidth="1.500">
            <path d="M10 19H1V1h19v7M4 5h13M4 9h10M4 12h6M4 15h5" />
            <circle cx="16.500" cy="15.500" r="6.500" fill="#fff" stroke="none" />
            <path d="M12 13q4-1 4 2t2 3M18 10q-1 3 3 4" stroke="#2b579a" />
          </svg>
        </button>
        <button type="button" aria-label="Zoom out" className="ml-2 h-px w-[14px] bg-white" />
        <label className="relative ml-[9px] flex w-[164px] items-center">
          <input
            type="range"
            aria-label="Zoom"
            defaultValue={28}
            className="h-5 w-full appearance-none bg-transparent [&::-webkit-slider-runnable-track]:h-0.5 [&::-webkit-slider-runnable-track]:bg-white [&::-webkit-slider-thumb]:-mt-[9px] [&::-webkit-slider-thumb]:h-5 [&::-webkit-slider-thumb]:w-[9px] [&::-webkit-slider-thumb]:appearance-none [&::-webkit-slider-thumb]:bg-white"
          />
          <span className="absolute left-1/2 h-2.5 w-[3px] bg-white" />
        </label>
        <button type="button" aria-label="Zoom in" className="mx-2">
          <svg width="14" height="14" stroke="#fff" strokeWidth="1.200"><path d="M7 0v14M0 7h14" /></svg>
        </button>
        <span className="w-[66px] pb-0.5 pl-3">60%</span>
      </div>
    </footer>
  );
}

export default function App() {
  return (
    <main className="flex h-screen flex-col overflow-hidden bg-[linear-gradient(to_right,#5de0e6,#004aad)] pr-[397px] pb-[201px] pl-[364px] font-['Open_Sans','Noto_Sans',sans-serif]">
      <h1 className="mt-[128px] mr-[-95px] ml-[-66px] h-[237px] shrink-0 pr-[95px] text-center font-[Inter] text-[154px] leading-[184px] font-semibold whitespace-nowrap text-[#f9f8f7] [text-shadow:7px_7px_0_rgba(8,20,28,0.48)]">
        Technical Document
      </h1>
      <div className="relative flex min-h-0 flex-1 flex-col">
        <div className="absolute -right-[50px] -bottom-[118px] -left-[60px] h-[380px] rounded-[50%] bg-[#0c2630]/80 blur-[52px]" />
        <div className="relative flex min-h-0 flex-1 flex-col overflow-hidden bg-white">
          <TabBar />
          <Ribbon />
          <div className="flex h-[38px] shrink-0">
            <button type="button" aria-label="Tab stop" className="flex h-9 w-[38px] items-center justify-center border-4 border-[#e3e3e3] bg-[#fafafa]">
              <svg width="11" height="12" fill="none" stroke="#666" strokeWidth="4"><path d="M2 0v10h9" /></svg>
            </button>
            <div className="ml-[209px] pt-[3px]">
              <HorizontalRuler />
            </div>
          </div>
          <Document />
          <StatusBar />
        </div>
      </div>
    </main>
  );
}
